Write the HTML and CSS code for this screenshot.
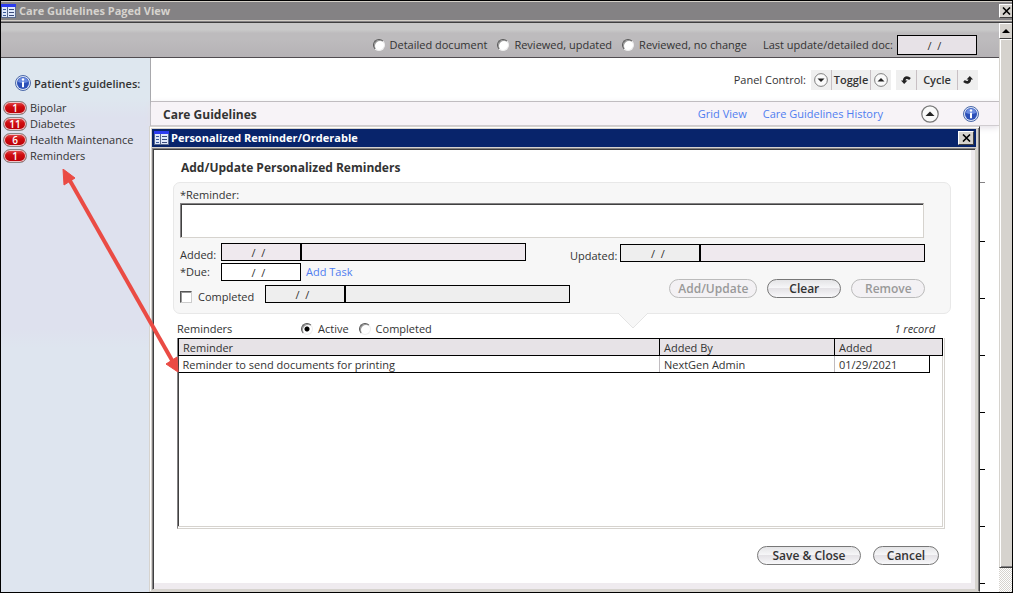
FILE: index.html
```html
<!DOCTYPE html>
<html lang="en">
<head>
    <meta charset="utf-8">
    <meta name="viewport" content="width=device-width, initial-scale=1">
    <title>Care Guidelines Paged View</title>
    <link rel="stylesheet" href="styles.css">
</head>
<body>

<!-- Shared icons -->
<svg class="symbols" aria-hidden="true">
    <symbol id="form-icon" viewBox="0 0 15 14">
        <rect width="15" height="14" fill="#5a6a8c"/>
        <rect x="1" y="3" width="13" height="10" fill="#dfe8fa"/>
        <rect x="0" y="0" width="15" height="3" fill="#2c3cf0"/>
        <path d="M2 5.500h3M2 8.500h3M2 11.500h3" stroke="#3a5a9c"/>
        <path d="M8 5.500h5M8 8.500h5M8 11.500h5" stroke="#3a4a7c"/>
        <path d="M6.500 3v11" stroke="#5a6a8c"/>
    </symbol>
    <symbol id="info-icon" viewBox="0 0 16 16">
        <circle cx="8" cy="8" r="7.500" fill="#dfe6f6" stroke="#4a68a8"/>
        <circle cx="8" cy="8" r="6" fill="#2c50b8"/>
        <path d="M3 7a5 4.500 0 0 1 10 0q-5 2-10 0z" fill="#6c8ce0"/>
        <circle cx="8" cy="4.500" r="1.200" fill="#fff"/>
        <path d="M8 6.800v5.500" stroke="#fff" stroke-width="2" fill="none"/>
    </symbol>
    <symbol id="close-icon" viewBox="0 0 9 8">
        <path d="M1 .5l7 7M8 .5l-7 7" stroke="#000" stroke-width="1.600"/>
    </symbol>
    <symbol id="up-icon" viewBox="0 0 18 18">
        <circle cx="9" cy="9" r="8.200" fill="#fafafa" stroke="#777" stroke-width="1.200"/>
        <path d="M4.500 11L9 6.500l4.500 4.500z" fill="#222"/>
    </symbol>
    <symbol id="turn-icon" viewBox="0 0 10 10">
        <path d="M0 5.500h6.500L3.200 9z" fill="#222"/>
        <path d="M3.200 6.500C3 2.500 6 1.500 9 4" stroke="#222" stroke-width="2.600" fill="none"/>
    </symbol>
</svg>

<div class="window">
    <header class="titlebar">
        <svg class="form-icon"><use href="#form-icon"/></svg>
        <h1>Care Guidelines Paged View</h1>
        <button type="button" class="close" aria-label="Close window"><svg><use href="#close-icon"/></svg></button>
    </header>

    <div class="window-body">
        <div class="page">
            <form class="toolbar">
                <label class="option"><input type="radio" name="review">Detailed document</label>
                <label class="option"><input type="radio" name="review">Reviewed, updated</label>
                <label class="option"><input type="radio" name="review">Reviewed, no change</label>
                <label for="lastUpdate" class="last-label">Last update/detailed doc:</label>
                <input type="text" id="lastUpdate" class="field date tall" value="/  /" readonly>
            </form>

            <div class="columns">
                <nav class="sidebar">
                    <h2><svg class="info"><use href="#info-icon"/></svg><span>Patient's guidelines:</span></h2>
                    <ul>
                        <li><span class="badge">1</span>Bipolar</li>
                        <li><span class="badge">11</span>Diabetes</li>
                        <li><span class="badge">6</span>Health Maintenance</li>
                        <li><span class="badge">1</span>Reminders</li>
                    </ul>
                </nav>

                <main class="main">
                    <div class="panel-control">
                        <span class="panel-label">Panel Control:</span>
                        <div class="group">
                            <button type="button" aria-label="Expand"><svg class="flip"><use href="#up-icon"/></svg></button>
                            <button type="button" class="word">Toggle</button>
                            <button type="button" aria-label="Collapse"><svg><use href="#up-icon"/></svg></button>
                        </div>
                        <div class="group">
                            <button type="button" aria-label="Previous"><svg class="turn"><use href="#turn-icon"/></svg></button>
                            <button type="button" class="word cycle">Cycle</button>
                            <button type="button" aria-label="Next"><svg class="turn flip"><use href="#turn-icon"/></svg></button>
                        </div>
                    </div>
                    <div class="section-bar">
                        <h2>Care Guidelines</h2>
                        <a href="#">Grid View</a>
                        <a href="#">Care Guidelines History</a>
                        <button type="button" class="up" aria-label="Collapse section"><svg><use href="#up-icon"/></svg></button>
                        <svg class="info"><use href="#info-icon"/></svg>
                    </div>
                    <div class="ticks"></div>
                </main>
            </div>
        </div>

        <div class="scrollbar">
            <div class="scroll-up"></div>
            <div class="scroll-thumb"></div>
        </div>
    </div>
</div>

<!-- Reminder dialog -->
<div class="dialog" role="dialog" aria-labelledby="dialogTitle">
    <div class="dialog-bar">
        <svg class="form-icon"><use href="#form-icon"/></svg>
        <h2 id="dialogTitle">Personalized Reminder/Orderable</h2>
        <button type="button" class="close" aria-label="Close dialog"><svg><use href="#close-icon"/></svg></button>
    </div>

    <form class="dialog-body">
        <h3>Add/Update Personalized Reminders</h3>

        <div class="card">
            <label for="reminder" class="block-label">*Reminder:</label>
            <textarea id="reminder"></textarea>
            <div class="card-columns">
                <div class="left-fields">
                    <div class="row">
                        <label for="added" class="short low">Added:</label>
                        <input type="text" id="added" class="field date" value="/  /" readonly>
                        <input type="text" class="field wide" aria-label="Added by" readonly>
                    </div>
                    <div class="row">
                        <label for="due" class="short">*Due:</label>
                        <input type="text" id="due" class="field date editable" value="/  /">
                        <a href="#">Add Task</a>
                    </div>
                    <div class="row done">
                        <label class="check low"><input type="checkbox">Completed</label>
                        <input type="text" class="field date gray" aria-label="Completed date" value="/  /" readonly>
                        <input type="text" class="field wide gray" aria-label="Completed by" readonly>
                    </div>
                </div>
                <div class="right-fields">
                    <div class="row">
                        <label for="updated" class="updated low">Updated:</label>
                        <input type="text" id="updated" class="field date gray" value="/  /" readonly>
                        <input type="text" class="field wide" aria-label="Updated by" readonly>
                    </div>
                    <div class="buttons">
                        <button type="button" class="pill medium" disabled>Add/Update</button>
                        <button type="button" class="pill">Clear</button>
                        <button type="button" class="pill" disabled>Remove</button>
                    </div>
                </div>
            </div>
            <svg class="pointer" viewBox="0 0 30 16"><path d="M0 0L15 15L30 0" fill="#f7f7f7" stroke="#e4e4e4"/></svg>
        </div>

        <div class="filter">
            <span class="filter-name">Reminders</span>
            <label class="option"><input type="radio" name="status" checked>Active</label>
            <label class="option"><input type="radio" name="status">Completed</label>
            <em>1 record</em>
        </div>

        <div class="list">
            <table>
                <colgroup>
                    <col>
                    <col class="col-by">
                    <col class="col-on">
                    <col class="col-spare">
                </colgroup>
                <thead>
                    <tr><th>Reminder</th><th>Added By</th><th colspan="2">Added</th></tr>
                </thead>
                <tbody>
                    <tr><td>Reminder to send documents for printing</td><td>NextGen Admin</td><td class="on">01/29/2021</td><td class="spare"></td></tr>
                </tbody>
            </table>
        </div>

        <div class="actions">
            <button type="button" class="pill large">Save &amp; Close</button>
            <button type="button" class="pill small">Cancel</button>
        </div>
    </form>
</div>

<!-- Callout arrow from the sidebar to the reminder row -->
<svg class="arrow" viewBox="0 0 120 206">
    <path d="M7 10L111 193" stroke="#ea4b44" stroke-width="4"/>
    <path d="M1 0L13 9L2 16zM116 203L104 195L115 188z" fill="#ea4b44" stroke="#ea4b44"/>
</svg>

</body>
</html>
```
FILE: styles.css
```css
* {
    box-sizing: border-box;
}

body {
    margin: 0;
    font: 11px/16px "Open Sans", "Noto Sans", sans-serif;
    color: #333;
}

h1, h2, h3, ul {
    margin: 0;
    padding: 0;
    font-size: 12px;
}

ul {
    list-style: none;
    font-size: 11px;
}

button, input, textarea {
    margin: 0;
    font: inherit;
    color: inherit;
}

a {
    color: #4f7df0;
    text-decoration: none;
}

svg {
    display: block;
}

.symbols {
    display: none;
}

/* Outer window */
.window {
    display: flex;
    flex-direction: column;
    min-height: 100vh;
    border: 1px solid #000;
    background: #fff;
}

.titlebar {
    display: flex;
    align-items: center;
    gap: 3px;
    height: 22px;
    border-top: 1px solid #d4d0c8;
    border-bottom: 1px solid #404040;
    background: #848284;
    box-shadow: inset 0 -1px #848284, inset 0 -2px #d4d0c8;
    padding-bottom: 2px;
}

.titlebar h1 {
    color: #d6d3ce;
    font-size: 11px;
}

.form-icon {
    width: 15px;
    height: 14px;
}

.close {
    display: flex;
    align-items: center;
    justify-content: center;
    width: 16px;
    height: 14px;
    margin-left: auto;
    padding: 0;
    border: 1px solid;
    border-color: #fff #404040 #404040 #fff;
    background: #d6d3ce;
}

.titlebar .close {
    width: 13px;
    border-right: 0;
}

.close svg {
    width: 9px;
    height: 8px;
}

.window-body {
    display: flex;
    flex: 1;
}

.page {
    display: flex;
    flex-direction: column;
    flex: 1;
}

/* Toolbar */
.toolbar {
    display: flex;
    align-items: center;
    justify-content: flex-end;
    height: 35px;
    padding: 12px 22px 2px 0;
    border-bottom: 1px solid #504c50;
    background: linear-gradient(#c9c9c9 0 20%, #bdbbbd 30% 50%, #b5b2b5);
}

.option {
    display: flex;
    align-items: center;
    gap: 5px;
    margin-right: 10px;
}

input[type="radio"] {
    appearance: none;
    width: 12px;
    height: 12px;
    border: 1px solid;
    border-color: #555 #eee #eee #555;
    border-radius: 50%;
    background: #fff;
    box-shadow: inset 1px 1px #999;
}

input[type="radio"]:checked {
    background: radial-gradient(circle, #000 0 2px, #fff 3px);
}

.last-label {
    margin: 0 4px 0 6px;
}

.field {
    height: 18px;
    padding: 0 5px 0 0;
    border: 1px solid #000;
    border-radius: 0;
    background: #efe9ee;
    text-align: center;
    white-space: pre;
}

.date {
    width: 80px;
}

.wide {
    width: 225px;
}

.tall {
    height: 20px;
    background: #e7e2e7;
}

.gray {
    background: #eee;
}

.editable {
    background: #fff;
}

/* Sidebar */
.columns {
    display: flex;
    flex: 1;
}

.sidebar {
    width: 150px;
    padding: 17px 0 0 2px;
    border-right: 1px solid #a8a8ac;
    background: linear-gradient(#dee7ef 0 40px, #dee1ee 60px 270px, #dee5ef 290px);
}

.sidebar h2 {
    display: flex;
    align-items: center;
    gap: 3px;
    margin-bottom: 9px;
    padding-left: 12px;
    font-size: 11px;
    font-weight: 600;
    line-height: 16px;
}

.sidebar h2 span {
    padding-top: 2px;
    line-height: 14px;
}

.info {
    width: 16px;
    height: 16px;
}

.sidebar li {
    display: flex;
    align-items: center;
    gap: 3px;
    height: 16px;
}

.badge {
    width: 24px;
    height: 14px;
    border: 1px solid #888;
    border-radius: 7px;
    background: linear-gradient(#e05050, #d00c10 40%, #b80008);
    box-shadow: inset 0 0 0 1px #eec8cc;
    color: #fff;
    font-size: 10px;
    font-weight: 600;
    line-height: 12px;
    text-align: center;
}

/* Main area */
.main {
    display: flex;
    flex-direction: column;
    flex: 1;
}

.panel-control {
    display: flex;
    align-items: center;
    justify-content: flex-end;
    gap: 5px;
    height: 43px;
    padding-right: 21px;
}

.group {
    display: flex;
    gap: 1px;
    border-radius: 3px;
    background: #c8c0c4;
}

.group button {
    display: flex;
    align-items: center;
    justify-content: center;
    width: 20px;
    height: 20px;
    padding: 0;
    border: 0;
    background: #efefef;
}

.group svg {
    width: 14px;
    height: 14px;
}

.group .turn {
    width: 10px;
    height: 10px;
}

.flip {
    transform: rotate(180deg);
}

.group .word {
    width: 38px;
    font-weight: 600;
}

.group .cycle {
    width: 40px;
}

.section-bar {
    display: flex;
    align-items: center;
    height: 25px;
    padding: 1px 20px 0 12px;
    border-top: 1px solid #c0bcc0;
    border-bottom: 1px solid #d0ccd0;
    background: #f7f3f7;
    box-shadow: 0 2px 6px #e4e0e6;
}

.section-bar h2 {
    margin-right: auto;
    padding-top: 2px;
}

.section-bar a {
    margin-right: 16px;
}

.section-bar .up {
    margin: 0 24px 0 22px;
    padding: 0;
    border: 0;
    background: none;
}

.up svg {
    width: 18px;
    height: 18px;
}

.ticks {
    flex: 1;
    width: 40px;
    margin: 56px 14px 0 auto;
    border-top: 1px solid #848284;
    background: repeating-linear-gradient(transparent 0 56px, #000 56px 57px) 0 2px;
}

/* Scrollbar */
.scrollbar {
    display: flex;
    flex-direction: column;
    width: 13px;
    padding-bottom: 24px;
    background: repeating-conic-gradient(#fff 0 25%, #d6d3ce 0 50%) 0 0 / 2px 2px;
}

.scroll-up {
    display: flex;
    align-items: center;
    justify-content: center;
    height: 16px;
    border: 1px solid;
    border-color: #fff #d6d3ce #404040 #fff;
    background: #d6d3ce;
}

.scroll-up::before {
    content: '';
    border: 4px solid transparent;
    border-top: 0;
    border-bottom-color: #000;
}

.scroll-thumb {
    flex: 1;
    border-left: 1px solid #d6d3ce;
    border-bottom: 1px solid #404040;
    background: #d6d3ce;
    box-shadow: inset 1px 1px #fff, inset 0 -1px #848284;
}

/* Dialog lies over the page */
.dialog {
    position: absolute;
    top: 126px;
    right: 33px;
    bottom: 1px;
    left: 149px;
    display: flex;
    flex-direction: column;
    border: 1px solid;
    border-color: #d6d3ce #404040 #d6d3ce #d6d3ce;
    padding: 2px 3px 1px 2px;
    background: #d6d3ce;
    box-shadow: inset 1px 1px #fff, inset -1px 0 #848284;
}

.dialog-bar {
    display: flex;
    align-items: center;
    gap: 2px;
    height: 18px;
    margin-bottom: 1px;
    padding: 0 2px;
    background: #08246b;
    color: #fff;
}

.dialog-bar h2 {
    font-size: 11px;
}

.dialog-body {
    flex: 1;
    padding: 10px 26px 0 24px;
    border: 1px solid;
    border-color: #848284 #d6d3ce #d6d3ce #848284;
    background: #fff;
    box-shadow: inset 1px 1px #404040, inset -4px -6px #efebef;
}

.dialog-body h3 {
    padding: 1px 4px 6px;
}

.card {
    position: relative;
    margin: 0 -2px 0 -4px;
    padding: 4px 26px 10px 6px;
    border: 1px solid #e8e8e8;
    border-radius: 7px;
    background: #f7f7f7;
}

.block-label {
    display: block;
}

textarea {
    display: block;
    width: 100%;
    height: 35px;
    border: 1px solid;
    border-color: #848284 #d6d3ce #d6d3ce #848284;
    border-radius: 0;
    background: #fff;
    box-shadow: inset 1px 1px #404040;
    resize: none;
}

.card-columns {
    display: flex;
    justify-content: space-between;
    margin-top: 5px;
}

.row {
    display: flex;
    align-items: center;
    height: 18px;
    margin-bottom: 2px;
}

.row a {
    margin-left: 5px;
}

.short {
    width: 41px;
}

/* Labels that sit below the middle of their field */
.low {
    padding-top: 6px;
}

.done {
    margin: 4px 0 0;
}

.check {
    display: flex;
    align-items: center;
    gap: 6px;
    width: 85px;
}

input[type="checkbox"] {
    appearance: none;
    width: 12px;
    height: 12px;
    border: 1px solid;
    border-color: #555 #ccc #ccc #555;
    background: #fff;
    box-shadow: inset 1px 1px #999;
}

.right-fields {
    padding-top: 1px;
}

.updated {
    margin-right: 3px;
}

.buttons {
    display: flex;
    justify-content: flex-end;
    gap: 10px;
    margin-top: 17px;
}

.pill {
    width: 74px;
    height: 19px;
    padding: 0;
    border: 1px solid #777;
    border-radius: 10px;
    background: linear-gradient(#e4e4e6, #f6f6f8 45%, #e4e2e6 50%, #f8f8fa);
    font-size: 12px;
    line-height: 16px;
    font-weight: 600;
}

.pill:disabled {
    border-color: #bbb;
    background: #f3f1f4;
    color: #999;
}

.medium {
    width: 88px;
}

.large {
    width: 104px;
}

.small {
    width: 66px;
}

.pointer {
    position: absolute;
    top: 100%;
    left: 444px;
    width: 30px;
    height: 16px;
}

/* Reminder list */
.filter {
    display: flex;
    align-items: center;
    margin-top: 7px;
}

.filter-name {
    width: 124px;
}

.filter em {
    margin-left: auto;
    padding-right: 14px;
}

.list {
    height: 191px;
    margin: 1px 4px 0 0;
    padding-right: 1px;
    border: 1px solid;
    border-color: transparent #d6d3ce #d6d3ce #848284;
    border-top: 0;
    box-shadow: inset -1px -1px #fff, inset -2px -2px #d6d3ce, inset 1px 0 #404040;
}

table {
    width: 100%;
    border-collapse: collapse;
    table-layout: fixed;
}

.col-by {
    width: 175px;
}

.col-on {
    width: 95px;
}

.col-spare {
    width: 13px;
}

th {
    height: 17px;
    padding: 0 4px;
    border: 1px solid #000;
    background: #e7e3e7;
    font-weight: normal;
    text-align: left;
    line-height: 15px;
}

td {
    height: 17px;
    padding: 0 4px;
    border-right: 1px solid #c0bcc0;
    border-bottom: 1px solid #000;
    line-height: 15px;
}

td.on {
    border-right-color: #000;
}

td.spare {
    border: 0;
    padding: 0;
}

.actions {
    display: flex;
    justify-content: flex-end;
    gap: 12px;
    margin-top: 17px;
    padding-right: 10px;
}

/* Callout arrow over the dialog edge */
.arrow {
    position: absolute;
    top: 169px;
    left: 62px;
    width: 120px;
    height: 206px;
    pointer-events: none;
}
```
